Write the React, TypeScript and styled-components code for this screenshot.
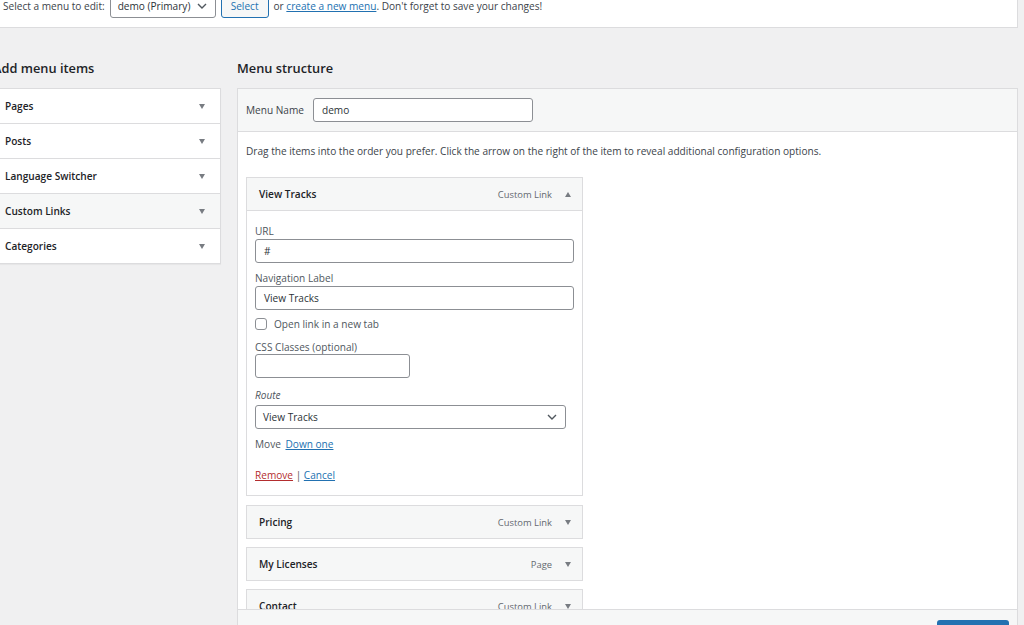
import styled, { createGlobalStyle } from "styled-components";

const GlobalStyle = createGlobalStyle`
  html, body {
    margin: 0;
    padding: 0;
    height: 625px;
    overflow: hidden;
    background: #f0f0f1;
  }
  body {
    font-family: "Open Sans", "Liberation Sans", sans-serif;
    font-size: 10.1px;
    color: #3c434a;
  }
`;

interface IMenuItem {
  title: string;
  type: string;
  open?: boolean;
}

const sections = ["Pages", "Posts", "Language Switcher", "Custom Links", "Categories"];

const menuItems: IMenuItem[] = [
  { title: "View Tracks", type: "Custom Link", open: true },
  { title: "Pricing", type: "Custom Link" },
  { title: "My Licenses", type: "Page" },
  { title: "Contact", type: "Custom Link" },
];

const Chevron = () => (
  <svg width="10" height="6" viewBox="0 0 10 6">
    <polyline points="1,1 5,5 9,1" fill="none" stroke="#50575e" strokeWidth="1.4" />
  </svg>
);

export default function App() {
  return (
    <>
      <GlobalStyle />
      <Page>
        <TopBar>
          <span>Select a menu to edit:</span>
          <FakeSelect $width={106}>
            demo (Primary)
            <Chevron />
          </FakeSelect>
          <SecondaryButton>Select</SecondaryButton>
          <span>
            or <Link>create a new menu</Link>. Don't forget to save your changes!
          </span>
        </TopBar>

        <Columns>
          <LeftCol>
            <Heading>Add menu items</Heading>
            <Accordion>
              {sections.map((name) => (
                <AccRow key={name} $active={name === "Custom Links"}>
                  {name}
                  <Arrow />
                </AccRow>
              ))}
            </Accordion>
          </LeftCol>

          <RightCol>
            <Heading>Menu structure</Heading>
            <MenuBox>
              <MenuHeader>
                <span>Menu Name</span>
                <TextInput $width={220}>demo</TextInput>
              </MenuHeader>
              <MenuBody>
                <Hint>
                  Drag the items into the order you prefer. Click the arrow on the right of the
                  item to reveal additional configuration options.
                </Hint>
                {menuItems.map((item) => (
                  <Item key={item.title}>
                    <ItemHandle>
                      <ItemTitle>{item.title}</ItemTitle>
                      <ItemType>{item.type}</ItemType>
                      <Arrow $up={item.open} />
                    </ItemHandle>
                    {item.open && (
                      <Settings>
                        <FieldLabel>URL</FieldLabel>
                        <TextInput $mb={8}>#</TextInput>
                        <FieldLabel>Navigation Label</FieldLabel>
                        <TextInput $mb={8}>View Tracks</TextInput>
                        <CheckRow>
                          <Checkbox />
                          Open link in a new tab
                        </CheckRow>
                        <FieldLabel $gap={0}>CSS Classes (optional)</FieldLabel>
                        <TextInput $width={155} $mb={10} />
                        <FieldLabel $italic $gap={3}>
                          Route
                        </FieldLabel>
                        <FakeSelect $width={311} $mb={8}>
                          View Tracks
                          <Chevron />
                        </FakeSelect>
                        <MoveRow>
                          Move <Link>Down one</Link>
                        </MoveRow>
                        <Actions>
                          <Link $danger>Remove</Link> <Sep>|</Sep> <Link>Cancel</Link>
                        </Actions>
                      </Settings>
                    )}
                  </Item>
                ))}
              </MenuBody>
              <MenuFooter>
                <PrimaryButton>Save Menu</PrimaryButton>
              </MenuFooter>
            </MenuBox>
          </RightCol>
        </Columns>
      </Page>
    </>
  );
}

const Page = styled.div`
  margin-left: -7px;
  width: 1025px;
`;

const TopBar = styled.div`
  margin-top: -14px;
  padding: 8px 9px 9px;
  background: #fff;
  border: 1px solid #dcdcde;
  border-top: none;
  display: flex;
  align-items: center;
  gap: 5px;
  white-space: nowrap;
`;

const FakeSelect = styled.div<{ $width: number; $mb?: number }>`
  box-sizing: border-box;
  width: ${(p) => p.$width}px;
  height: 24px;
  margin-bottom: ${(p) => p.$mb ?? 0}px;
  padding: 0 8px 0 7px;
  border: 1px solid #8c8f94;
  border-radius: 3px;
  background: #fff;
  color: #2c3338;
  display: flex;
  align-items: center;
  justify-content: space-between;
`;

const SecondaryButton = styled.div`
  box-sizing: border-box;
  height: 24px;
  padding: 0 9px;
  border: 1px solid #2271b1;
  border-radius: 3px;
  background: #f6f7f7;
  color: #2271b1;
  display: flex;
  align-items: center;
`;

const Link = styled.span<{ $danger?: boolean }>`
  color: ${(p) => (p.$danger ? "#b32d2e" : "#2271b1")};
  text-decoration: underline;
`;

const Columns = styled.div`
  display: flex;
  gap: 16px;
  align-items: flex-start;
`;

const LeftCol = styled.div`
  width: 228px;
  flex-shrink: 0;
`;

const RightCol = styled.div`
  flex: 1;
  min-width: 0;
`;

const Heading = styled.h2`
  margin: 30px 0 10px;
  height: 20px;
  line-height: 20px;
  font-size: 12.8px;
  font-weight: 600;
  color: #1d2327;
`;

const Accordion = styled.div`
  background: #fff;
  border: 1px solid #dcdcde;
  box-shadow: 0 1px 1px rgba(0, 0, 0, 0.04);
`;

const AccRow = styled.div<{ $active?: boolean }>`
  height: 34px;
  padding: 0 15px 0 11px;
  display: flex;
  align-items: center;
  justify-content: space-between;
  font-weight: 600;
  color: #1d2327;
  background: ${(p) => (p.$active ? "#f6f7f7" : "#fff")};
  & + & {
    border-top: 1px solid #dcdcde;
  }
`;

const Arrow = styled.span<{ $up?: boolean }>`
  width: 0;
  height: 0;
  border-left: 3.5px solid transparent;
  border-right: 3.5px solid transparent;
  ${(p) =>
    p.$up ? "border-bottom: 5px solid #787c82;" : "border-top: 5px solid #787c82;"}
`;

const MenuBox = styled.div`
  box-sizing: border-box;
  height: 571px;
  background: #fff;
  border: 1px solid #dcdcde;
  display: flex;
  flex-direction: column;
`;

const MenuHeader = styled.div`
  height: 42px;
  padding: 0 8px;
  background: #f6f7f7;
  border-bottom: 1px solid #dcdcde;
  display: flex;
  align-items: center;
  gap: 9px;
  color: #3c434a;
  flex-shrink: 0;
`;

const TextInput = styled.div<{ $width?: number; $mb?: number }>`
  box-sizing: border-box;
  width: ${(p) => (p.$width ? `${p.$width}px` : "100%")};
  height: 24px;
  margin-bottom: ${(p) => p.$mb ?? 0}px;
  padding: 0 8px;
  border: 1px solid #8c8f94;
  border-radius: 3px;
  background: #fff;
  color: #2c3338;
  display: flex;
  align-items: center;
`;

const MenuBody = styled.div`
  flex: 1;
  overflow: hidden;
  padding: 11px 8px 0;
`;

const Hint = styled.p`
  margin: 0 0 18px;
  line-height: 16px;
  color: #3c434a;
`;

const Item = styled.div`
  width: 337px;
  margin-bottom: 8px;
`;

const ItemHandle = styled.div`
  height: 32px;
  padding: 0 11px 0 12px;
  background: #f6f7f7;
  border: 1px solid #dcdcde;
  display: flex;
  align-items: center;
  gap: 13px;
`;

const ItemTitle = styled.span`
  flex: 1;
  font-weight: 600;
  color: #1d2327;
`;

const ItemType = styled.span`
  color: #646970;
  font-size: 9.4px;
`;

const Settings = styled.div`
  padding: 13px 8px 13px;
  border: 1px solid #dcdcde;
  border-top: none;
  margin-bottom: 9px;
`;

const FieldLabel = styled.div<{ $italic?: boolean; $gap?: number }>`
  line-height: 14px;
  margin-bottom: ${(p) => p.$gap ?? 1}px;
  color: #50575e;
  font-style: ${(p) => (p.$italic ? "italic" : "normal")};
`;

const CheckRow = styled.label`
  display: flex;
  align-items: center;
  gap: 7px;
  height: 12px;
  margin-bottom: 10px;
  color: #50575e;
`;

const Checkbox = styled.span`
  box-sizing: border-box;
  width: 12px;
  height: 12px;
  border: 1px solid #8c8f94;
  border-radius: 3px;
  background: #fff;
`;

const MoveRow = styled.div`
  line-height: 14px;
  margin-bottom: 17px;
  color: #50575e;
  ${Link} {
    margin-left: 2px;
  }
`;

const Actions = styled.div`
  line-height: 14px;
`;

const Sep = styled.span`
  color: #50575e;
`;

const MenuFooter = styled.div`
  flex-shrink: 0;
  padding: 10px 8px 12px;
  background: #f6f7f7;
  border-top: 1px solid #dcdcde;
  display: flex;
  justify-content: flex-end;
`;

const PrimaryButton = styled.div`
  width: 72px;
  height: 26px;
  border-radius: 3px;
  background: #2271b1;
  color: #fff;
  display: flex;
  align-items: center;
  justify-content: center;
`;
